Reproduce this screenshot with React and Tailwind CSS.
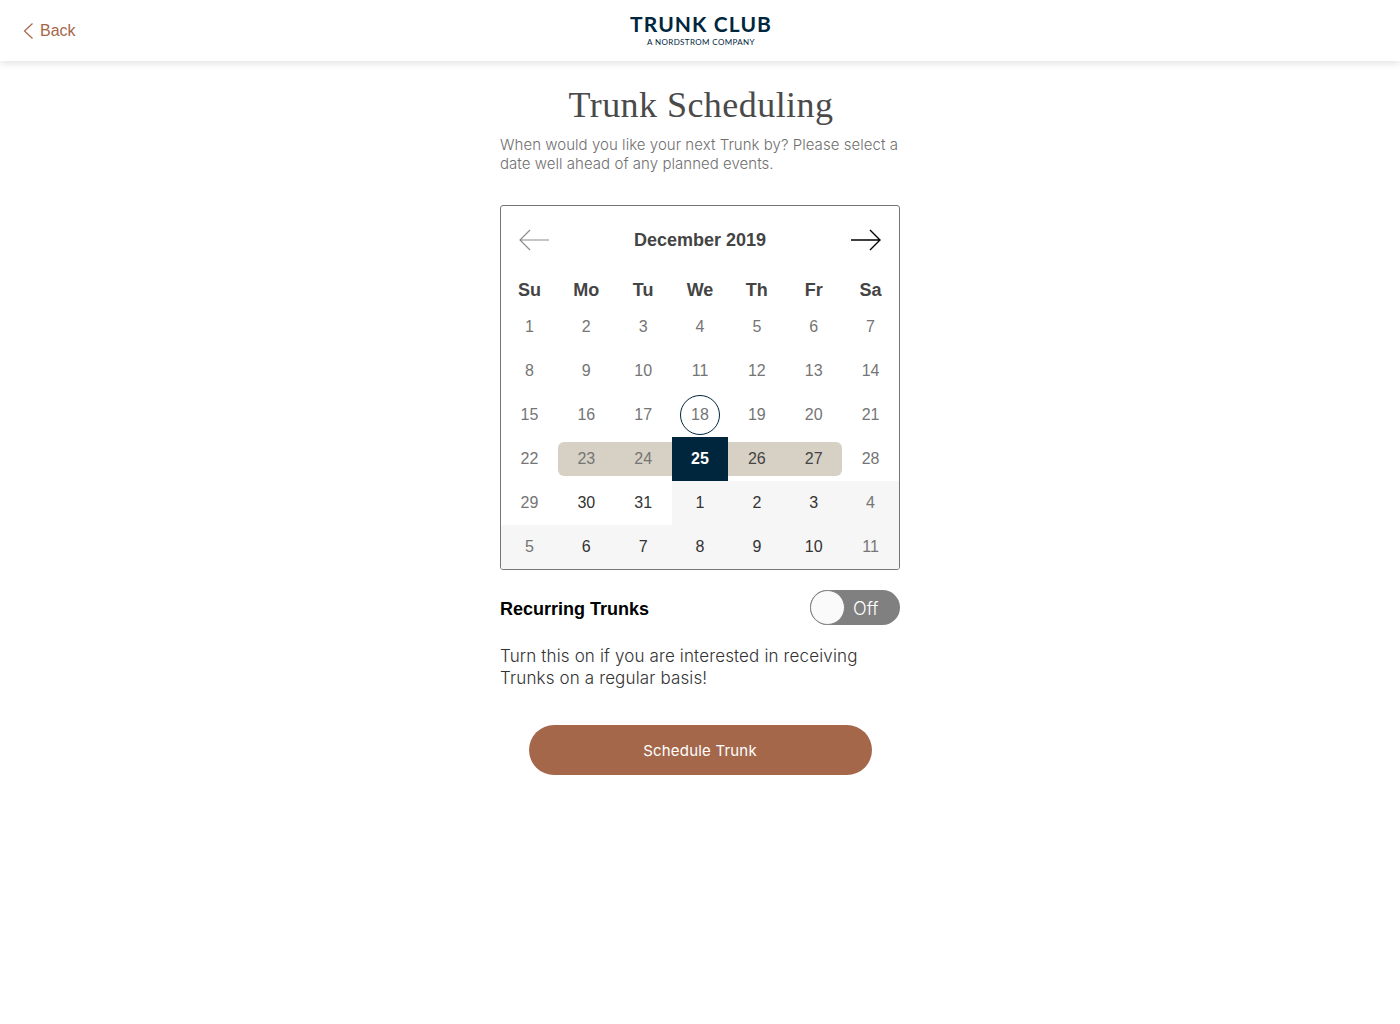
import React from 'react';

const weeks = [
  [1, 2, 3, 4, 5, 6, 7],
  [8, 9, 10, 11, 12, 13, 14],
  [15, 16, 17, 18, 19, 20, 21],
  [22, 23, 24, 25, 26, 27, 28],
  [29, 30, 31, 1, 2, 3, 4],
  [5, 6, 7, 8, 9, 10, 11],
];
const dayNames = ['Su', 'Mo', 'Tu', 'We', 'Th', 'Fr', 'Sa'];

const ArrowLeft = ({ className }) => (
  <svg width="32" height="24" viewBox="0 0 32 24" fill="none" stroke="currentColor" strokeWidth="1.2" className={className}>
    <path d="M31 12H2M12 2 2 12l10 10" />
  </svg>
);

const ArrowRight = ({ className }) => (
  <svg width="32" height="24" viewBox="0 0 32 24" fill="none" stroke="currentColor" strokeWidth="1.4" className={className}>
    <path d="M1 12h29M20 2l10 10-10 10" />
  </svg>
);

function DayCell({ day, week, col }) {
  const nextMonth = (week === 4 && col >= 3) || week === 5;
  const weekend = col === 0 || col === 6;
  const selected = week === 3 && col === 3;
  const inRange = week === 3 && col >= 1 && col <= 5 && !selected;
  const today = week === 2 && col === 3;

  let color = 'text-[#757575]';
  if (selected) color = 'text-white font-bold';
  else if (week === 3 && col >= 4 && col <= 5) color = 'text-[#444444]';
  else if (week >= 4 && !weekend) color = 'text-[#333333]';

  return (
    <div className={`relative flex h-11 items-center justify-center ${nextMonth ? 'bg-[#f6f6f6]' : ''}`}>
      {inRange && (
        <div className={`absolute inset-x-0 top-[5px] h-[34px] bg-[#d6d1c4] ${col === 1 ? 'rounded-l-md' : ''} ${col === 5 ? 'rounded-r-md' : ''}`} />
      )}
      {selected && <div className="absolute inset-0 bg-[#00263e]" />}
      {today && <div className="absolute left-1/2 top-[2px] size-10 -translate-x-1/2 rounded-full border border-[#00263e]" />}
      <span className={`relative text-base ${color}`}>{day}</span>
    </div>
  );
}

export default function App() {
  return (
    <div className="min-h-[1024px] bg-white font-['Liberation_Sans',sans-serif]">
      {/* Header */}
      <header className="relative flex h-[61px] items-start justify-center bg-white shadow-[0_2px_8px_rgba(0,0,0,0.12)]">
        <a className="absolute left-[23px] top-[19px] flex items-center gap-[7px] text-base text-[#a5674a]">
          <svg width="10" height="16" viewBox="0 0 10 16" fill="none" stroke="currentColor" strokeWidth="1.2">
            <path d="M9.5 .5 1.5 8l8 7.5" />
          </svg>
          Back
        </a>
        <div className="ml-[2px] flex flex-col items-center pt-[12px] text-[#00263e]">
          <span className="font-['Lato',sans-serif] text-[21px] font-bold leading-[24px] tracking-[1.1px]">TRUNK CLUB</span>
          <span className="mt-[1px] font-['Lato',sans-serif] text-[8px] leading-[10px] tracking-[0.38px]">A NORDSTROM COMPANY</span>
        </div>
      </header>

      <main className="mx-auto flex w-[400px] flex-col">
        <h1 className="mt-[24px] pl-[2px] text-center font-['Liberation_Serif',serif] text-[36px] font-normal leading-[40px] tracking-[0.45px] text-[#4a4a4a]">
          Trunk Scheduling
        </h1>
        <p className="mt-[10px] font-['Inter',sans-serif] text-[15px] font-light leading-[19px] tracking-[0.04px] text-[#707070]">
          When would you like your next Trunk by? Please select a date well ahead of any planned events.
        </p>

        {/* Calendar */}
        <div className="mt-[32px] overflow-hidden rounded-[3px] border border-[#757575]">
          <div className="flex h-[68px] items-center justify-between px-[17px]">
            <ArrowLeft className="text-[#8c8c8c]" />
            <span className="text-lg font-bold text-[#444444]">December 2019</span>
            <ArrowRight className="text-black" />
          </div>
          <div className="grid h-[31px] grid-cols-7 items-center pt-[1px]">
            {dayNames.map(name => (
              <div key={name} className="text-center text-lg font-bold text-[#444444]">{name}</div>
            ))}
          </div>
          {weeks.map((days, w) => (
            <div key={w} className="grid grid-cols-7">
              {days.map((day, c) => (
                <DayCell key={c} day={day} week={w} col={c} />
              ))}
            </div>
          ))}
        </div>

        {/* Recurring toggle */}
        <div className="mt-5 flex items-center justify-between">
          <span className="pt-[2px] text-lg font-bold text-black">Recurring Trunks</span>
          <div className="flex h-[35px] w-[90px] items-center rounded-full bg-[#808080]">
            <div className="size-[35px] rounded-full border border-[#808080] bg-[#fafafa]" />
            <span className="ml-[8px] pt-[2px] font-['Inter',sans-serif] text-lg font-light text-white">Off</span>
          </div>
        </div>
        <p className="mt-5 font-['Inter',sans-serif] text-[17px] font-light leading-[22px] tracking-[0.14px] text-[#333333]">
          Turn this on if you are interested in receiving Trunks on a regular basis!
        </p>

        <button className="mx-auto mt-[36px] h-[50px] w-[343px] rounded-full bg-[#a5674a] pt-[2px] font-['Inter',sans-serif] text-[15px] font-normal tracking-[0.2px] text-white">
          Schedule Trunk
        </button>
      </main>
    </div>
  );
}
